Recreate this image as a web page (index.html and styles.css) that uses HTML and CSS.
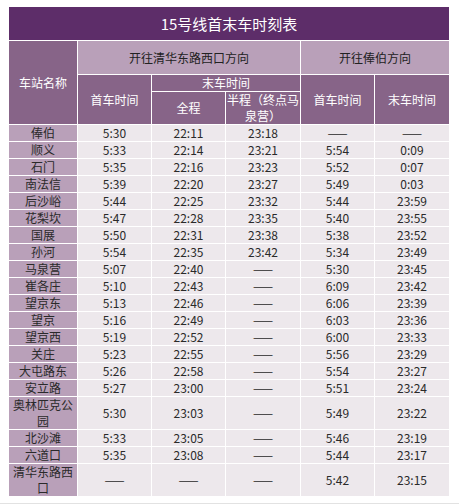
FILE: index.html
```html
<!DOCTYPE html>
<html lang="zh-CN">
<head>
<meta charset="utf-8">
<title>15号线首末车时刻表</title>
<link rel="stylesheet" href="styles.css">
</head>
<body>
<div class="page">
<table class="tt">
  <colgroup>
    <col class="c-st"><col class="c-a"><col class="c-a"><col class="c-b"><col class="c-a"><col class="c-b">
  </colgroup>
  <thead>
    <tr><th class="title" colspan="6">15号线首末车时刻表</th></tr>
    <tr class="dir">
      <th class="hd" rowspan="3">车站名称</th>
      <th class="lt" colspan="3">开往清华东路西口方向</th>
      <th class="lt" colspan="2">开往俸伯方向</th>
    </tr>
    <tr class="sub1">
      <th class="hd" rowspan="2">首车时间</th>
      <th class="hd" colspan="2">末车时间</th>
      <th class="hd" rowspan="2">首车时间</th>
      <th class="hd" rowspan="2">末车时间</th>
    </tr>
    <tr class="sub2">
      <th class="hd">全程</th>
      <th class="hd">半程（终点马泉营）</th>
    </tr>
  </thead>
  <tbody>
    <tr><th>俸伯</th><td>5:30</td><td>22:11</td><td>23:18</td><td>——</td><td>——</td></tr>
    <tr><th>顺义</th><td>5:33</td><td>22:14</td><td>23:21</td><td>5:54</td><td>0:09</td></tr>
    <tr><th>石门</th><td>5:35</td><td>22:16</td><td>23:23</td><td>5:52</td><td>0:07</td></tr>
    <tr><th>南法信</th><td>5:39</td><td>22:20</td><td>23:27</td><td>5:49</td><td>0:03</td></tr>
    <tr><th>后沙峪</th><td>5:44</td><td>22:25</td><td>23:32</td><td>5:44</td><td>23:59</td></tr>
    <tr><th>花梨坎</th><td>5:47</td><td>22:28</td><td>23:35</td><td>5:40</td><td>23:55</td></tr>
    <tr><th>国展</th><td>5:50</td><td>22:31</td><td>23:38</td><td>5:38</td><td>23:52</td></tr>
    <tr><th>孙河</th><td>5:54</td><td>22:35</td><td>23:42</td><td>5:34</td><td>23:49</td></tr>
    <tr><th>马泉营</th><td>5:07</td><td>22:40</td><td>——</td><td>5:30</td><td>23:45</td></tr>
    <tr><th>崔各庄</th><td>5:10</td><td>22:43</td><td>——</td><td>6:09</td><td>23:42</td></tr>
    <tr><th>望京东</th><td>5:13</td><td>22:46</td><td>——</td><td>6:06</td><td>23:39</td></tr>
    <tr><th>望京</th><td>5:16</td><td>22:49</td><td>——</td><td>6:03</td><td>23:36</td></tr>
    <tr><th>望京西</th><td>5:19</td><td>22:52</td><td>——</td><td>6:00</td><td>23:33</td></tr>
    <tr><th>关庄</th><td>5:23</td><td>22:55</td><td>——</td><td>5:56</td><td>23:29</td></tr>
    <tr><th>大屯路东</th><td>5:26</td><td>22:58</td><td>——</td><td>5:54</td><td>23:27</td></tr>
    <tr><th>安立路</th><td>5:27</td><td>23:00</td><td>——</td><td>5:51</td><td>23:24</td></tr>
    <tr><th>奥林匹克公园</th><td>5:30</td><td>23:03</td><td>——</td><td>5:49</td><td>23:22</td></tr>
    <tr><th>北沙滩</th><td>5:33</td><td>23:05</td><td>——</td><td>5:46</td><td>23:19</td></tr>
    <tr><th>六道口</th><td>5:35</td><td>23:08</td><td>——</td><td>5:44</td><td>23:17</td></tr>
    <tr><th>清华东路西口</th><td>——</td><td>——</td><td>——</td><td>5:42</td><td>23:15</td></tr>
  </tbody>
</table>
<div class="rule"></div>
</div>
</body>
</html>
```
FILE: styles.css
```css
html, body {
  margin: 0;
  padding: 0;
  background: #ffffff;
}
.page {
  padding: 6px 0 0 8px;
  font-family: "Noto Sans CJK SC", "Noto Sans", sans-serif;
}
.tt {
  border-collapse: collapse;
  table-layout: fixed;
  width: 442px;
  font-size: 12px;
  line-height: 16px;
}
.c-st { width: 69px; }
.c-a { width: 74px; }
.c-b { width: 75px; }
.tt th, .tt td {
  border: 1px solid #ffffff;
  padding: 0;
  text-align: center;
  vertical-align: middle;
  font-weight: normal;
  color: #2a2a2a;
}
.tt .title {
  background: #5d2d69;
  color: #ffffff;
  font-size: 15px;
  height: 33px;
}
.tt .lt {
  background: #b9a0b9;
  color: #222222;
  height: 33px;
}
.tt .hd {
  background: #876488;
  color: #ffffff;
}
.sub1 .hd { height: 16px; }
.sub2 .hd { height: 32px; }
.tt tbody th {
  background: #b9a0b9;
  color: #2a2a2a;
}
.tt tbody td {
  background: #ede8ec;
}
.tt tbody th, .tt tbody td {
  height: 16px;
}
.rule {
  margin: 6px 0 0 -8px;
  height: 2px;
  width: 459px;
  background: #e2e2e2;
}
```
